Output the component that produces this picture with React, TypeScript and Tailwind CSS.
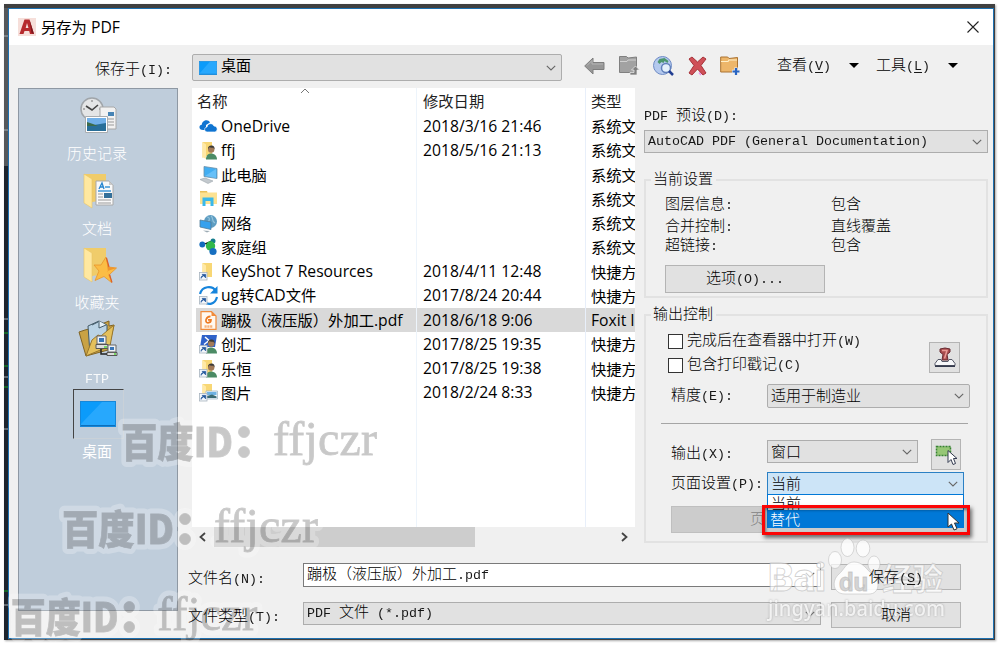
import type { ReactNode } from 'react';

// Splits a label so that CJK and Latin runs can have their own size.
function splitRuns(text: string) {
    return text.match(/[\x00-\x7f]+|[^\x00-\x7f]+/g) ?? [];
}

function isLatin(run: string) {
    return run.charCodeAt(0) < 128;
}

// Bitmap-like dialog text
function Label({ text, className = '' }: { text: string; className?: string }) {
    return (
        <span className={`whitespace-pre pb-[2px] font-['Noto_Sans_CJK_SC',sans-serif] text-[15px] leading-[18px] font-light ${className}`}>
            {splitRuns(text).map((run, i) =>
                isLatin(run) ? <span key={i} className="font-['Liberation_Mono',monospace] text-[13.33px] opacity-90">{run}</span> : run
            )}
        </span>
    );
}

// Text of the file list
function ListText({ text, className = '' }: { text: string; className?: string }) {
    return (
        <span className={`whitespace-pre pb-[2px] font-['Noto_Sans_CJK_SC',sans-serif] text-[15.3px] leading-[22px] ${className}`}>
            {splitRuns(text).map((run, i) =>
                isLatin(run) ? <span key={i} className="font-['Open_Sans',sans-serif] text-[15.7px]">{run}</span> : run
            )}
        </span>
    );
}

function Chevron({ className = '' }: { className?: string }) {
    return (
        <svg width="10" height="6" viewBox="0 0 10 6" fill="none" stroke="#666" strokeWidth="1.1" className={`shrink-0 ${className}`}>
            <path d="M0.8 0.8 5 5 9.2 0.8" />
        </svg>
    );
}

function Select({ children, className = '' }: { children: ReactNode; className?: string }) {
    return (
        <div className={`flex items-center justify-between border border-[#adadad] bg-[#e1e1e1] pr-[5px] pl-[3px] ${className}`}>
            {children}
            <Chevron />
        </div>
    );
}

function Button({ children, className = '' }: { children: ReactNode; className?: string }) {
    return <div className={`flex shrink-0 items-center justify-center border border-[#b4b4b4] bg-[#e1e1e1] ${className}`}>{children}</div>;
}

function Screen({ className }: { className: string }) {
    return (
        <svg viewBox="0 0 36 26" preserveAspectRatio="none" className={className}>
            <rect x="0.5" y="0.5" width="35" height="25" fill="#0b9bfa" stroke="#1687d9" />
            <path d="M1 23 22 1h13v24H1z" fill="#3fb2ff" opacity="0.55" />
            <path d="M1 24.5h34" stroke="#0d6fbb" />
        </svg>
    );
}

function Shortcut() {
    return (
        <g>
            <rect x="0.5" y="10.5" width="7.5" height="7.5" fill="#f4f7fb" stroke="#a9b3bf" strokeWidth="0.8" />
            <path d="M2 16.5c0-2 1-3 3-3M3.2 12.4h3.4v3.4z" fill="#24589c" stroke="#24589c" strokeWidth="0.8" />
        </g>
    );
}

function Folder() {
    return (
        <g>
            <path d="M3.5 1h9.5v14H6l-2.5 2z" fill="#f8d775" />
            <path d="M3.5 1 7 3.5V18l-3.5-2z" fill="#ffe9a6" />
        </g>
    );
}

function Person() {
    return (
        <g>
            <path d="M7 18.5c0-4 2-6 5-6s6 2 6 6z" fill="#4b8b65" />
            <circle cx="12.2" cy="8.6" r="3.2" fill="#a27a57" />
            <path d="M9 8.5c-.3-3 1.200-4 3.300-4s3.800 1.300 3.100 4l-1-1.800c-2 .3-3.500 0-4.300-.4z" fill="#3d3b38" />
        </g>
    );
}

const fileIcons: Record<string, ReactNode> = {
    cloud: (
        <g fill="#0f74d1">
            <path d="M4 13C-.5 13-.5 8 2.800 7.800 3 3.500 9 1.500 11 5.500L7 8v5z" />
            <path d="M8.500 15c-4 0-3.500-5-.5-5 .5-4 5.500-4.500 7-1 3.800 0 4.500 5.500.5 6z" stroke="#fff" strokeWidth=".7" />
        </g>
    ),
    user: <g><Folder /><Person /></g>,
    pc: (
        <g>
            <path d="m1 14.500 5-1.500 8 3-5 2.500z" fill="#c3c9ce" stroke="#9ca6ad" strokeWidth=".6" />
            <path d="m5 1.500 13 2v10l-13-2z" fill="#42aef2" stroke="#6d8fa6" strokeWidth=".8" />
            <path d="m6 11 11-7v9z" fill="#80ccfb" opacity=".6" />
        </g>
    ),
    library: (
        <g>
            <path d="M1 2h7l1 1.500h9V15H1z" fill="#fce292" />
            <path d="M1 2h7v1.500H1z" fill="#e8c15c" />
            <path d="M3.500 17V8.500h11V17h-3v-5h-5v5z" fill="#39b8ea" />
        </g>
    ),
    network: (
        <g>
            <circle cx="11.500" cy="7.500" r="6.500" fill="#5e9dc2" />
            <path d="M8 3c3 0 3 3 1 5M12 2c3 2 0 5 4 7" stroke="#94c4dc" strokeWidth="1.200" fill="none" />
            <path d="m1 6 11 2v7.500L1 13z" fill="#36a1ee" stroke="#517c98" strokeWidth=".8" />
            <path d="m4 16.500 7 .5-3 1.500z" fill="#9dabb4" />
        </g>
    ),
    homegroup: (
        <g>
            <path d="m4 6 7 1 3-5M11 7l4 6" stroke="#bcc" strokeWidth="1" />
            <circle cx="3.300" cy="6.500" r="2.900" fill="#116cbd" />
            <circle cx="14" cy="3" r="2.500" fill="#157d8d" />
            <circle cx="11.500" cy="8" r="4.700" fill="#32b84b" />
            <circle cx="14" cy="13.500" r="3.600" fill="#176fc0" />
        </g>
    ),
    folderLink: <g><Folder /><Shortcut /></g>,
    sync: (
        <g>
            <path d="M1 8C3 0 13-1 17 5M18 11c-2 8-9 8-12 5" fill="none" stroke="#1684dc" strokeWidth="2.200" />
            <path d="M18.500 0v7.500H11z" fill="#1684dc" />
            <Shortcut />
        </g>
    ),
    pdf: (
        <g>
            <path d="M2 .7h10.500L17 5v13.300H2z" fill="#fff8ef" stroke="#f18b3a" strokeWidth="1.200" />
            <path d="M12.500.7V5H17z" fill="#f18b3a" />
            <path d="M11.500 5.300c-5 .2-6 6.500-2.500 6.500 2 0 3-1.500 3-3H9" fill="none" stroke="#ee7a22" strokeWidth="1.700" />
            <path d="M5.500 15.500h8" stroke="#f6b27e" strokeWidth="2.500" strokeDasharray="2.200 .6" />
        </g>
    ),
    script: (
        <g>
            <path d="M3 0h15l-2 12H1z" fill="#2f62c9" />
            <path d="m6 2 4 3.500-5 4" fill="none" stroke="#fff" strokeWidth="1.500" />
            <Person />
            <Shortcut />
        </g>
    ),
    userLink: <g><Folder /><Person /><Shortcut /></g>,
    pictures: (
        <g>
            <Folder />
            <path d="M7 8h11.500v8H7z" fill="#e9f3fa" stroke="#9cb3c2" strokeWidth=".7" />
            <path d="M8 9h9.500v3H8z" fill="#6eb2e3" />
            <path d="m8 13 5-1.500 4.500 2v1.500H8z" fill="#3a6b73" />
            <Shortcut />
        </g>
    ),
};

const files = [
    { icon: 'cloud', name: 'OneDrive', date: '2018/3/16 21:46', type: '系统文' },
    { icon: 'user', name: 'ffj', date: '2018/5/16 21:13', type: '系统文' },
    { icon: 'pc', name: '此电脑', date: '', type: '系统文' },
    { icon: 'library', name: '库', date: '', type: '系统文' },
    { icon: 'network', name: '网络', date: '', type: '系统文' },
    { icon: 'homegroup', name: '家庭组', date: '', type: '系统文' },
    { icon: 'folderLink', name: 'KeyShot 7 Resources', date: '2018/4/11 12:48', type: '快捷方' },
    { icon: 'sync', name: 'ug转CAD文件', date: '2017/8/24 20:44', type: '快捷方' },
    { icon: 'pdf', name: '蹦极（液压版）外加工.pdf', date: '2018/6/18 9:06', type: 'Foxit I', selected: true },
    { icon: 'script', name: '创汇', date: '2017/8/25 19:35', type: '快捷方' },
    { icon: 'userLink', name: '乐恒', date: '2017/8/25 19:38', type: '快捷方' },
    { icon: 'pictures', name: '图片', date: '2018/2/24 8:33', type: '快捷方' },
];

function BigFolder() {
    return (
        <g>
            <path d="M4 2h22v26l-14 2z" fill="#f0cc6a" />
            <path d="m4 2 8 5v29l-8-5z" fill="#ffe8a0" stroke="#e8c566" strokeWidth=".6" />
        </g>
    );
}

const places = [
    {
        name: '历史记录',
        icon: (
            <g>
                <circle cx="12" cy="12" r="11" fill="#e4e5e6" stroke="#a0a5aa" strokeWidth="1.500" />
                <path d="M12 3v2M21 12h-2M3 12h2M12 21v-2" stroke="#777" />
                <path d="m6 9 6 4 6-5" stroke="#444" strokeWidth="1.600" fill="none" />
                <path d="M20 10h14l2 2v20H20z" fill="#f2f2f2" stroke="#a8a8a8" />
                <path d="M28 15h6v4h-6z" fill="#4784b5" />
                <path d="M24 22h10M24 25h10M24 28h10" stroke="#999" />
                <path d="M5.500 19.500h22v16h-22z" fill="#fff" stroke="#a9adb0" />
                <path d="M7 21h19v8H7z" fill="#72b0e8" />
                <path d="m7 27 7 1 12-2v8H7z" fill="#286e98" />
                <path d="m7 25 6 2 5 2H7z" fill="#3c6b4a" />
            </g>
        ),
    },
    {
        name: '文档',
        icon: (
            <g>
                <BigFolder />
                <path d="M16 9h13l4 4v20H16z" fill="#f9f9f9" stroke="#a9a9a9" />
                <path d="M29 9v4h4z" fill="#ccc" />
                <path d="m19 17 3-6 2 6M20 15h3" stroke="#2785cf" strokeWidth="1.300" fill="none" />
                <path d="M25 15h5M18 19h13" stroke="#4096d6" strokeWidth="1.400" />
                <path d="M24 21h8v5h-8z" fill="#336f99" />
                <path d="M18 22h5M18 25h5M18 28h13M18 31h13" stroke="#999" />
            </g>
        ),
    },
    {
        name: '收藏夹',
        icon: (
            <g>
                <BigFolder />
                <path d="m26 11 2.500 10 8 1-7 6.500 2 8-7.500-6-9 4 4-9.500-5-6h7z" fill="#fbbd45" stroke="#e9952b" strokeWidth=".8" />
                <path d="m26 11 2.500 10 8 1-9 3 4 11.500-3-7z" fill="#f0952c" />
                <path d="m26.500 12 2.500 9M29.500 28.500l2.500 8" stroke="#d9602b" strokeWidth="1.200" />
            </g>
        ),
    },
    {
        name: 'FTP',
        icon: (
            <g>
                <path d="m-1 11 6-2 4-1 20-8v5l5-1-6 25L6 35z" fill="#c9a244" stroke="#806426" />
                <path d="m8 5 11-5 8 4v20l-17 9z" fill="#bad3e5" stroke="#435a68" />
                <path d="m12 4 6-3M19 0v7l7-3" stroke="#435a68" fill="#e6f1f8" />
                <path d="m12 19 6-5 3 1 13-11-4 21L6 35z" fill="#e4c05c" stroke="#98762c" />
                <path d="M17 15h9v8h-9z" fill="#eef1f4" stroke="#666" />
                <path d="M19 17h5v4h-5z" fill="#3875b8" />
                <path d="M16 23.500h12v4H16zM27 31.500h10v3H27z" fill="#ddd" stroke="#555" />
                <path d="M28 24h8v7h-8z" fill="#eef1f4" stroke="#666" />
                <path d="M30 26h4v3h-4z" fill="#3875b8" />
                <path d="M21 28v5h6" fill="none" stroke="#222" strokeWidth="1.500" />
                <path d="M24 26h3M34 33h2" stroke="#58d33f" strokeWidth="1.500" />
            </g>
        ),
    },
];

function MenuLabel({ text, hotkey, className = '' }: { text: string; hotkey: string; className?: string }) {
    return (
        <span className={`pb-[3px] ${className}`}>
            <Label text={`${text}(`} />
            <Label text={hotkey} className="underline underline-offset-2" />
            <Label text=")" />
        </span>
    );
}

function Toolbar() {
    return (
        <div className="flex h-[43px] shrink-0 items-start pl-[86px] pt-[9px]">
            <Label text="保存于(I):" className="mt-[5px] w-[97px]" />
            <Select className="h-[27px] w-[370px] rounded-[2px]">
                <div className="flex items-center gap-[4px] pl-[3px]">
                    <Screen className="mt-[1px] h-[14px] w-[18px]" />
                    <Label text="桌面" className="-mt-[3px] font-normal" />
                </div>
            </Select>
            <div className="ml-[22px] flex h-[24px] items-center gap-[13.5px]">
                <svg width="21" height="20" viewBox="0 0 21 20">
                    <path d="M.7 10 9 2v4.500h11v7H9V18z" fill="#979797" stroke="#7e7e7e" />
                    <path d="m3 9.500 5-5V8h11" fill="none" stroke="#b5b5b5" />
                </svg>
                <svg width="21" height="20" viewBox="0 0 21 20">
                    <path d="M.5.5h7L9 2l8.500-1v15.500H.5z" fill="#a2a2a2" stroke="#808080" />
                    <path d="M1 5.500h7l1-1.500h8" stroke="#d0d0d0" fill="none" />
                    <path d="M16.500 10 20.500 14H18v5h-7v-2.500h4V14h-2.500z" fill="#808080" stroke="#f0f0f0" strokeWidth=".7" />
                </svg>
                <svg width="21" height="20" viewBox="0 0 21 20">
                    <circle cx="9.500" cy="9.500" r="9" fill="#b4c9ee" stroke="#6f8cc6" />
                    <path d="m4.500 6 2-3 5-1 4 3-1 2-3-2-1 2-2-1-2 2z" fill="#4c976e" />
                    <circle cx="13" cy="12" r="4.500" fill="#e4f1fc" stroke="#6281bb" strokeWidth="1.500" />
                    <path d="m16 15 4 4" stroke="#223e92" strokeWidth="2.500" />
                </svg>
                <svg width="19" height="20" viewBox="0 0 19 20">
                    <path d="m1 3 3-2 5.500 5L15 1l3 2-5 6.500L18 17l-3 2-5.500-6L4 19l-3-2 5-7.500z" fill="#cf5058" stroke="#a63239" />
                    <path d="M11 16.500 13 19" stroke="#f18ee6" strokeWidth="1.500" />
                </svg>
                <svg width="21" height="20" viewBox="0 0 21 20">
                    <path d="M.7 1h7L9 2.500l8.500-1V16H.7z" fill="#edb66a" stroke="#aa7332" />
                    <path d="M1 5.500h7l1-1.500h8" stroke="#fff0c9" strokeWidth="1.200" fill="none" />
                    <path d="M16 11.500v8M12 15.500h8" stroke="#f0f0f0" strokeWidth="3.500" />
                    <path d="M16 12v7M12.500 15.500h7" stroke="#2864c2" strokeWidth="2.200" />
                </svg>
            </div>
            <div className="ml-[36px] flex h-[22px] items-center">
                <MenuLabel text="查看" hotkey="V" />
                <svg width="10" height="5" className="ml-[18px]"><path d="M0 0h10L5 5z" /></svg>
                <MenuLabel text="工具" hotkey="L" className="ml-[17px]" />
                <svg width="10" height="5" className="ml-[18px]"><path d="M0 0h10L5 5z" /></svg>
            </div>
        </div>
    );
}

function Places() {
    return (
        <div className="flex h-[523px] w-[160px] shrink-0 flex-col items-center border-[1.500px] border-[#8e98a3] bg-[#bfcddb] pt-[2px] text-white">
            {places.map((place) => (
                <div key={place.name} className="flex h-[74.6px] shrink-0 flex-col items-center">
                    <svg width="38" height="50" viewBox="-1 -6 38 50" overflow="visible">{place.icon}</svg>
                    <Label text={place.name} className="mt-[3px] -ml-[2px]" />
                </div>
            ))}
            <div className="flex flex-col items-center">
                <div className="flex h-[50px] w-[51px] items-center justify-center border border-t-[#444] border-r-[#c9d1d8] border-b-[#c9d1d8] border-l-[#444]">
                    <Screen className="h-[26px] w-[36px]" />
                </div>
                <Label text="桌面" className="mt-[3px] -ml-[2px] font-normal" />
            </div>
        </div>
    );
}

function FileList() {
    return (
        <div className="w-[443px] shrink-0 overflow-hidden">
            <div className="relative h-[439px] bg-white pl-[4px]">
                <svg width="10" height="6" viewBox="0 0 10 6" className="absolute top-0 left-[108px]" fill="none" stroke="#777">
                    <path d="M1 5 5 1l4 4" />
                </svg>
                {/* column dividers */}
                <div className="absolute top-0 left-[224px] h-full w-px bg-[#edf4fb]" />
                <div className="absolute top-0 left-[393px] h-full w-px bg-[#e8effa]" />
                <div className="flex h-[26px] items-center text-[#222]">
                    <ListText text="名称" className="w-[227px] pl-px" />
                    <ListText text="修改日期" className="w-[168px]" />
                    <ListText text="类型" />
                </div>
                {files.map((file) => (
                    <div key={file.name} className={`flex h-[24.25px] items-center text-black ${file.selected ? 'bg-[#d9d9d9]' : ''}`}>
                        <svg width="19" height="19" viewBox="0 0 19 19" className="mr-[3px] ml-[3px] shrink-0">{fileIcons[file.icon]}</svg>
                        <ListText text={file.name} className="w-[202px] shrink-0" />
                        <ListText text={file.date} className="w-[168px] shrink-0" />
                        <ListText text={file.type} className="shrink-0" />
                    </div>
                ))}
            </div>
            <div className="flex h-[20px] items-center">
                <svg width="7" height="10" viewBox="0 0 7 10" className="ml-[7px]" fill="none" stroke="#444" strokeWidth="1.800"><path d="M6 1 1.500 5 6 9" /></svg>
                <div className="ml-[8px] h-[20px] w-[261px] bg-[#cdcdcd]" />
                <svg width="7" height="10" viewBox="0 0 7 10" className="ml-[146px]" fill="none" stroke="#444" strokeWidth="1.800"><path d="M1 1l4.500 4L1 9" /></svg>
            </div>
        </div>
    );
}

function InfoRow({ name, value, className = '' }: { name: string; value: string; className?: string }) {
    return (
        <div className={`flex h-[20px] ${className}`}>
            <Label text={name} className="w-[166px]" />
            <Label text={value} />
        </div>
    );
}

function Options() {
    return (
        <div className="ml-[9px] w-[344px] shrink-0">
            <Label text="PDF 预设(D):" className="block h-[42px] pt-[17px]" />
            <Select className="h-[23px]"><Label text="AutoCAD PDF (General Documentation)" className="pb-0" /></Select>

            <div className="mt-[26px] h-[119px] border-2 border-[#e2e2e2] pl-[19px]">
                <Label text="当前设置" className="-mt-[12px] -ml-[14px] block w-[65px] bg-[#f0f0f0] pl-[2px]" />
                <InfoRow name="图层信息:" value="包含" className="mt-[5px]" />
                <InfoRow name="合并控制:" value="直线覆盖" className="mt-[2px]" />
                <InfoRow name="超链接:" value="包含" className="-mt-px" />
                <Button className="mt-[10px] h-[28px] w-[160px]"><Label text="选项(O)..." /></Button>
            </div>

            <div className="mt-[16px] h-[229px] border-2 border-[#e2e2e2]">
                <Label text="输出控制" className="-mt-[12px] ml-[5px] block w-[65px] bg-[#f0f0f0] pl-[2px]" />
                <div className="flex pl-[22px]">
                    <div className="w-[261px] pt-[5px]">
                        <div className="flex h-[24px] items-center gap-[4px]">
                            <div className="h-[15px] w-[15px] border border-[#333] bg-white" />
                            <Label text="完成后在查看器中打开(W)" className="pb-0" />
                        </div>
                        <div className="flex h-[24px] items-center gap-[4px]">
                            <div className="h-[15px] w-[15px] border border-[#333] bg-white" />
                            <Label text="包含打印戳记(C)" className="pb-0" />
                        </div>
                    </div>
                    <Button className="mt-[18px] h-[31px] w-[31px]">
                        <svg width="22" height="22" viewBox="0 0 22 22">
                            <path d="M6 2q5-2 10 0v3l-3 2.500 1 5.500H8l1-5.500L6 5z" fill="#a84b4d" stroke="#682c32" />
                            <path d="M8 3.500h5l-2.500 8" fill="none" stroke="#e99b96" strokeWidth="1.500" />
                            <path d="M4 12.500h3l1 2h6l1-2h3l3 4v2H1v-2z" fill="#f7f8fa" stroke="#565968" />
                            <path d="M1 18.500h20v1.500H1z" fill="#343a4d" />
                        </svg>
                    </Button>
                </div>
                <div className="mt-[7px] flex h-[24px] items-center pl-[25px]">
                    <Label text="精度(E):" className="w-[96px]" />
                    <Select className="h-[24px] w-[203px] rounded-[2px]"><Label text="适用于制造业" /></Select>
                </div>
                <div className="mt-[15px] ml-[15px] h-px w-[307px] bg-[#a5a5a5]" />
                <div className="mt-[15px] flex h-[31px] items-start pl-[25px]">
                    <Label text="输出(X):" className="mt-[4px] w-[96px]" />
                    <Select className="mt-px h-[23px] w-[151px]"><Label text="窗口" /></Select>
                    <Button className="ml-[13px] h-[31px] w-[30px]">
                        <svg width="22" height="24" viewBox="0 0 22 24">
                            <path d="M1.500 3.500h14v9h-14z" fill="#96c776" stroke="#378232" strokeWidth="1.500" strokeDasharray="2 1" />
                            <path d="M13 7.500v12l3-3 2 5 2.500-1-2-5h3.500z" fill="#fff" stroke="#333b50" />
                        </svg>
                    </Button>
                </div>
                <div className="mt-[2px] flex items-start pl-[25px]">
                    <Label text="页面设置(P):" className="mt-px w-[96px]" />
                    <div className="relative">
                        <div className="flex h-[23px] w-[197px] items-center justify-between border border-[#2b80c4] bg-[#cce4f7] pr-[5px] pl-[3px]">
                            <Label text="当前" /><Chevron />
                        </div>
                        <div className="absolute top-[22px] left-0 z-10 h-[34px] w-[197px] overflow-hidden border border-[#0078d7] bg-white">
                            <Label text="当前" className="-mt-[1px] block h-[16px] pl-[3px]" />
                            <Label text="替代" className="relative block h-[18px] bg-[#0078d7] pl-[2px] text-white" />
                        </div>
                        {/* highlighted choice */}
                        <div className="absolute top-[33px] -left-[5px] z-20 h-[30px] w-[208px] border-[3px] border-[#fb0505] shadow-[2px_3px_4px_rgba(0,0,0,0.55),inset_1px_2px_3px_rgba(0,0,0,0.45)]" />
                        <svg width="13" height="20" viewBox="0 0 13 20" className="absolute top-[40px] left-[180px] z-30">
                            <path d="M1 1v14l3.500-3 2.500 6 3-1.200-2.500-5.800H12z" fill="#fff" stroke="#333" />
                        </svg>
                    </div>
                </div>
                <div className="mt-[10px] ml-[25px] h-[27px] w-[297px] border border-[#bfbfbf] bg-[#cccccc] pl-[78px] text-[#838383]">
                    <Label text="页" className="block pt-[2px]" />
                </div>
            </div>
        </div>
    );
}

function IdText() {
    return (
        <>
            <text x="6" y="45" textLength="112" lengthAdjust="spacingAndGlyphs" fontSize="40" fontWeight="900" fontFamily="'Noto Sans CJK SC', sans-serif">百度ID</text>
            <circle cx="129" cy="20" r="5.5" />
            <circle cx="129" cy="40" r="5.5" />
            <text x="158" y="43" textLength="104" fontSize="48" fontFamily="'Liberation Serif', serif">ffjczr</text>
        </>
    );
}

function IdMark({ width = 272, className }: { width?: number; className: string }) {
    return (
        <svg width={width} height="66" viewBox="0 0 272 66" preserveAspectRatio="none" className={`absolute z-40 ${className}`}>
            <g opacity="0.25" stroke="#fff" strokeWidth="11" strokeLinejoin="round" fill="#fff">
                <IdText />
            </g>
            <g opacity="0.21" stroke="#000" strokeWidth="0.8"><IdText /></g>
        </svg>
    );
}

function BaiduMark() {
    return (
        <svg width="190" height="90" viewBox="0 0 190 90" className="absolute top-[535px] left-[764px] z-40" fill="#fff" fillOpacity="0.7" stroke="#b4b4b4" strokeOpacity="0.6" strokeWidth="0.8">
            <ellipse cx="71" cy="25" rx="6.5" ry="8.500" />
            <ellipse cx="83.5" cy="12.5" rx="6.5" ry="9" />
            <ellipse cx="99" cy="13.5" rx="6.800" ry="8.5" />
            <ellipse cx="110" cy="29" rx="6" ry="8" />
            <path d="M90 27c-8 0-10 8-15 12-8 7-6 20 6 20h24c10 0 12-12 4-19-7-6-10-13-19-13z" fillOpacity="0.9" />
            <text x="4" y="56" textLength="58" lengthAdjust="spacingAndGlyphs" fontSize="38" fontWeight="900" fontFamily="Roboto, sans-serif">Bai</text>
            <text x="75" y="56" textLength="29" lengthAdjust="spacingAndGlyphs" fontSize="25" fontWeight="700" fill="#d4d4d4" fillOpacity="1" fontFamily="Roboto, sans-serif">du</text>
            <text x="118" y="55" textLength="61" lengthAdjust="spacingAndGlyphs" fontSize="31" fontWeight="700" fontFamily="'Noto Sans CJK SC', sans-serif">经验</text>
            <text x="4" y="81" textLength="177" lengthAdjust="spacingAndGlyphs" fontSize="21" fontWeight="500" stroke="none" fillOpacity="0.8" className="[filter:drop-shadow(0_0_1px_#9a9a9a)]" fontFamily="'Noto Sans', sans-serif">jingyan.baidu.com</text>
        </svg>
    );
}

export default function App() {
    return (
        <div className="relative h-[645px] w-[1000px] overflow-hidden bg-white pt-[4px] pl-[4px]">
            <div className="flex h-[636px] w-[991px] bg-[#404040] pt-[4px] shadow-[1px_1px_2px_#aaa]">
                {/* drawing window behind the dialog */}
                <svg width="4" height="632" className="shrink-0">
                    <path d="M0 0h4v158H0z" fill="#55585b" />
                    <path d="M0 158h4v474H0z" fill="#1d242d" />
                    <path d="M0 28h4M0 122h4M0 311h4M0 369h4M0 421h4M0 597h4" stroke="#a7adb3" />
                    <path d="M0 325h4M0 358h4M0 379h4M0 583h4" stroke="#10a520" />
                </svg>
                <div className="flex h-[631px] w-[986px] flex-col border border-[#1d70b0] bg-[#f0f0f0] text-black">
                    <div className="flex h-[36px] shrink-0 items-center bg-white pr-[14px] pl-[9px]">
                        <svg width="18" height="18" viewBox="0 0 18 18">
                            <path d="M0 0h18v18H0z" fill="#f6dfda" />
                            <path fillRule="evenodd" d="M6.500 1.500h5L16 16h-4l-.8-3H6.500l-1 3H1.500zM9 5l-1.300 5h2.800z" fill="#b62a2d" />
                            <path d="m11.500 1.500 4.500 14.500-2.500-1z" fill="#7e171f" />
                        </svg>
                        <ListText text="另存为 PDF" className="ml-[5px] grow" />
                        <svg width="12" height="12" viewBox="0 0 12 12" stroke="#222" strokeWidth="1.100"><path d="m.5.5 11 11M11.500.5l-11 11" /></svg>
                    </div>
                    <Toolbar />
                    <div className="flex pl-[9px]">
                        <Places />
                        <div className="ml-[14px] w-[797px]">
                            <div className="flex h-[475px]">
                                <FileList />
                                <Options />
                            </div>
                            <div className="flex h-[38px] items-start">
                                <Label text="文件名(N):" className="mt-[5px] -ml-[4px] w-[115px]" />
                                <div className="flex h-[24px] w-[518px] items-center justify-between border border-[#7a7a7a] bg-white pr-[5px] pl-[3px]">
                                    <Label text="蹦极（液压版）外加工.pdf" /><Chevron />
                                </div>
                                <Button className="mt-px ml-[10px] h-[26px] w-[130px]"><MenuLabel text="保存" hotkey="S" className="relative z-50" /></Button>
                            </div>
                            <div className="flex items-start">
                                <Label text="文件类型(T):" className="relative z-50 mt-[5px] -ml-[4px] w-[115px]" />
                                <Select className="mt-px h-[23px] w-[518px]"><Label text="PDF 文件 (*.pdf)" className="pb-0" /></Select>
                                <Button className="mt-px ml-[10px] h-[26px] w-[130px]"><Label text="取消" className="relative z-50" /></Button>
                            </div>
                        </div>
                    </div>
                </div>
            </div>
            <IdMark className="top-[412px] left-[115px]" />
            <IdMark className="top-[499px] left-[56px]" />
            <IdMark width={262} className="top-[587px] left-[5px]" />
            <BaiduMark />
        </div>
    );
}
